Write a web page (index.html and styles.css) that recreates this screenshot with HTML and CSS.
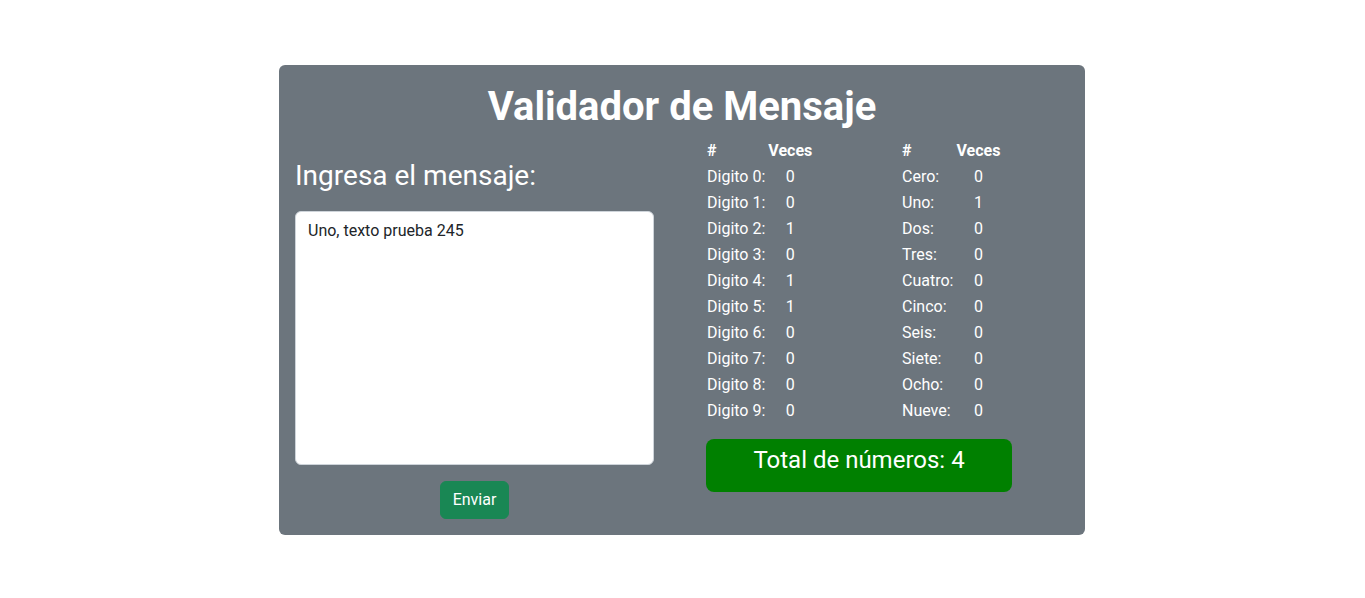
FILE: index.html
```html
<!DOCTYPE html>
<html lang="es">
<head>
<meta charset="utf-8">
<title>Validador de Mensaje</title>
<link rel="stylesheet" href="styles.css">
</head>
<body>
<div class="page">
  <div class="card">
    <h1 class="title">Validador de Mensaje</h1>
    <div class="content">
      <div class="left">
        <h3 class="label">Ingresa el mensaje:</h3>
        <textarea class="message">Uno, texto prueba 245</textarea>
        <div class="actions"><button class="btn">Enviar</button></div>
      </div>
      <div class="right">
        <div class="tables">
          <table class="counts">
            <thead><tr><th class="c1">#</th><th class="c2">Veces</th></tr></thead>
            <tbody>
              <tr><td class="c1">Digito 0:</td><td class="c2">0</td></tr>
              <tr><td class="c1">Digito 1:</td><td class="c2">0</td></tr>
              <tr><td class="c1">Digito 2:</td><td class="c2">1</td></tr>
              <tr><td class="c1">Digito 3:</td><td class="c2">0</td></tr>
              <tr><td class="c1">Digito 4:</td><td class="c2">1</td></tr>
              <tr><td class="c1">Digito 5:</td><td class="c2">1</td></tr>
              <tr><td class="c1">Digito 6:</td><td class="c2">0</td></tr>
              <tr><td class="c1">Digito 7:</td><td class="c2">0</td></tr>
              <tr><td class="c1">Digito 8:</td><td class="c2">0</td></tr>
              <tr><td class="c1">Digito 9:</td><td class="c2">0</td></tr>
            </tbody>
          </table>
          <table class="counts">
            <thead><tr><th class="c1">#</th><th class="c2">Veces</th></tr></thead>
            <tbody>
              <tr><td class="c1">Cero:</td><td class="c2">0</td></tr>
              <tr><td class="c1">Uno:</td><td class="c2">1</td></tr>
              <tr><td class="c1">Dos:</td><td class="c2">0</td></tr>
              <tr><td class="c1">Tres:</td><td class="c2">0</td></tr>
              <tr><td class="c1">Cuatro:</td><td class="c2">0</td></tr>
              <tr><td class="c1">Cinco:</td><td class="c2">0</td></tr>
              <tr><td class="c1">Seis:</td><td class="c2">0</td></tr>
              <tr><td class="c1">Siete:</td><td class="c2">0</td></tr>
              <tr><td class="c1">Ocho:</td><td class="c2">0</td></tr>
              <tr><td class="c1">Nueve:</td><td class="c2">0</td></tr>
            </tbody>
          </table>
        </div>
        <div class="total">Total de números: 4</div>
      </div>
    </div>
  </div>
</div>
</body>
</html>
```
FILE: styles.css
```css
* { box-sizing: border-box; }
html, body { margin: 0; padding: 0; background: #ffffff; }
body {
  font-family: Roboto, "Liberation Sans", sans-serif;
  font-size: 16px;
  line-height: 1.5;
  color: #212529;
}
.page {
  display: flex;
  justify-content: flex-start;
  padding-top: 65px;
  padding-left: 279px;
}
.card {
  width: 806px;
  height: 470px;
  background: #6c757d;
  border-radius: 6px;
  padding: 18px 16px 16px 16px;
  color: #ffffff;
}
.title {
  margin: 0 0 6px 0;
  font-size: 40px;
  line-height: 48px;
  font-weight: 700;
  text-align: center;
}
.content {
  display: flex;
  gap: 52px;
}
.left {
  width: 359px;
  display: flex;
  flex-direction: column;
}
.label {
  margin: 22px 0 18px 0;
  font-size: 28px;
  line-height: 34px;
  font-weight: 400;
}
.message {
  width: 359px;
  height: 254px;
  resize: none;
  border: 1px solid #ced4da;
  border-radius: 6px;
  padding: 7px 12px 6px 12px;
  font-family: inherit;
  font-size: 16px;
  line-height: 24px;
  color: #212529;
  background: #ffffff;
  display: block;
}
.actions {
  display: flex;
  justify-content: center;
  margin-top: 16px;
}
.btn {
  background: #198754;
  color: #ffffff;
  border: 1px solid #198754;
  border-radius: 6px;
  padding: 6px 12px;
  font-family: inherit;
  font-size: 16px;
  line-height: 24px;
}
.right {
  flex: 1;
  display: flex;
  flex-direction: column;
  padding-top: 1px;
}
.tables {
  display: grid;
  grid-template-columns: 195px 195px;
  justify-items: start;
  padding-left: 1px;
}
.counts {
  border-collapse: collapse;
  width: max-content;
}
.counts tr { height: 26px; }
.counts th, .counts td {
  padding: 0;
  line-height: 26px;
  vertical-align: middle;
}
.counts th { font-weight: 700; }
.counts .c1 { text-align: left; padding-right: 3px; }
.counts .c2 { text-align: center; }
.total {
  margin-top: 15px;
  width: 306px;
  height: 53px;
  background: #008000;
  border-radius: 8px;
  font-size: 24px;
  line-height: 29px;
  padding-top: 7px;
  text-align: center;
  color: #ffffff;
}
```
